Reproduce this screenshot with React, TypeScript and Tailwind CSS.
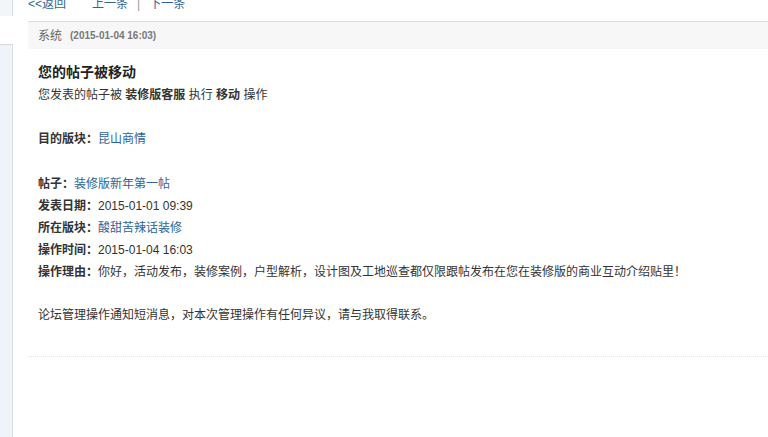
const FONT = "font-['Liberation_Sans','Noto_Sans_CJK_SC',sans-serif]";

type Row = { label: string; value: string; link?: boolean };

const ROWS: Row[] = [
  { label: "帖子：", value: "装修版新年第一帖", link: true },
  { label: "发表日期：", value: "2015-01-01 09:39" },
  { label: "所在版块：", value: "酸甜苦辣话装修", link: true },
  { label: "操作时间：", value: "2015-01-04 16:03" },
  {
    label: "操作理由：",
    value:
      "你好，活动发布，装修案例，户型解析，设计图及工地巡查都仅限跟帖发布在您在装修版的商业互动介绍贴里！",
  },
];

function InfoRow({ label, value, link }: Row) {
  return (
    <div className="h-[22px] leading-[22px] whitespace-nowrap">
      <b className="font-bold text-[#333]">{label}</b>
      <span className={link ? "text-[#2f6496]" : "text-[#333]"}>{value}</span>
    </div>
  );
}

export default function App() {
  return (
    <div className={`${FONT} flex w-[768px] h-[437px] overflow-hidden bg-white text-[12px] text-[#333]`}>
      {/* left frame edge */}
      <div className="w-[13px] flex-shrink-0 flex flex-col">
        <div className="h-[16px] bg-[#f3f6f9] border-r border-[#d5dde5]" />
        <div className="h-[28px] bg-white" />
        <div className="h-px bg-[#d8d8d8]" />
        <div className="flex-1 bg-[#eef4f9] border-r border-[#d5dde5]" />
      </div>

      <div className="ml-[15px] flex-1 flex flex-col min-w-0">
        {/* prev / next links, cut off at the top like the page above */}
        <div className="h-[21px] overflow-hidden">
          <div className="-mt-[7px] h-[22px] leading-[22px] flex items-center text-[#2f6496] whitespace-nowrap">
            <span>&lt;&lt;返回</span>
            <span className="ml-[26px]">上一条</span>
            <span className="mx-[9px] text-[#999]">|</span>
            <span>下一条</span>
          </div>
        </div>

        {/* message header */}
        <div className="h-[28px] bg-[#f7f7f7] border-t border-[#dddddd] flex items-center pl-[10px] whitespace-nowrap">
          <span className="text-[#666]">系统</span>
          <span className="ml-[8px] text-[10px] font-bold text-[#777]">(2015-01-04 16:03)</span>
        </div>

        {/* message body */}
        <div className="pl-[10px] pt-[12px] pb-[30px]">
          <div className="h-[23px] leading-[23px] text-[14px] font-bold text-[#222]">您的帖子被移动</div>
          <div className="h-[22px] leading-[22px] whitespace-nowrap">
            您发表的帖子被 <b className="font-bold">装修版客服</b> 执行 <b className="font-bold">移动</b> 操作
          </div>
          <div className="h-[22px]" />
          <InfoRow label="目的版块：" value="昆山商情" link />
          <div className="h-[23px]" />
          {ROWS.map((r) => (
            <InfoRow key={r.label} {...r} />
          ))}
          <div className="h-[21px]" />
          <div className="h-[22px] leading-[22px] whitespace-nowrap">
            论坛管理操作通知短消息，对本次管理操作有任何异议，请与我取得联系。
          </div>
        </div>

        <div className="border-t border-dotted border-[#e8e8e8]" />
      </div>
    </div>
  );
}
